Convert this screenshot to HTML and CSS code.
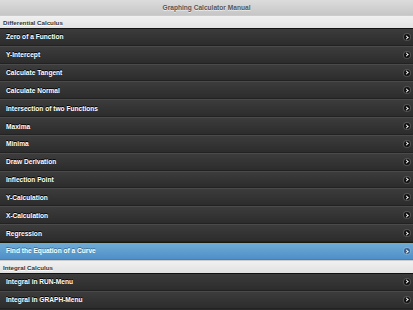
FILE: index.html
```html
<!DOCTYPE html>
<html lang="en">
<head>
  <meta charset="UTF-8" />
  <title>Graphing Calculator Manual</title>
  <link rel="stylesheet" href="styles.css">
</head>
<body>
  <div class="header">Graphing Calculator Manual</div>
  <ul class="list">
    <li class="divider">Differential Calculus</li>
    <li class="item first">Zero of a Function<span class="arrow"></span></li>
    <li class="item">Y-Intercept<span class="arrow"></span></li>
    <li class="item">Calculate Tangent<span class="arrow"></span></li>
    <li class="item">Calculate Normal<span class="arrow"></span></li>
    <li class="item">Intersection of two Functions<span class="arrow"></span></li>
    <li class="item">Maxima<span class="arrow"></span></li>
    <li class="item">Minima<span class="arrow"></span></li>
    <li class="item">Draw Derivation<span class="arrow"></span></li>
    <li class="item">Inflection Point<span class="arrow"></span></li>
    <li class="item">Y-Calculation<span class="arrow"></span></li>
    <li class="item">X-Calculation<span class="arrow"></span></li>
    <li class="item">Regression<span class="arrow"></span></li>
    <li class="item active">Find the Equation of a Curve<span class="arrow"></span></li>
    <li class="divider">Integral Calculus</li>
    <li class="item first">Integral in RUN-Menu<span class="arrow"></span></li>
    <li class="item">Integral in GRAPH-Menu<span class="arrow"></span></li>
  </ul>
</body>
</html>
```

FILE: styles.css
```css
body {
  margin: 0;
  font-family: 'Liberation Sans', Arial, sans-serif;
  background: #2a2a2a;
  overflow: hidden;
}
.header {
  height: 15px;
  line-height: 15px;
  text-align: center;
  font-size: 6.6px;
  font-weight: bold;
  color: #555;
  text-shadow: 0 1px 0 #eee;
  background: linear-gradient(#dcdcdc, #c6c6c6);
}
.list {
  list-style: none;
  margin: 0;
  padding: 0;
}
.divider {
  height: 13px;
  line-height: 13px;
  box-sizing: border-box;
  padding-left: 3px;
  font-size: 6.2px;
  font-weight: bold;
  color: #333;
  text-shadow: 0 1px 0 #fff;
  background: linear-gradient(#f0f0f0, #e2e2e2);
  border-top: 1px solid #ccc;
}
.item {
  position: relative;
  height: 17.83px;
  box-sizing: border-box;
  display: flex;
  align-items: center;
  padding-left: 6px;
  font-size: 6.6px;
  font-weight: bold;
  color: #fff;
  text-shadow: 0 -1px 0 #000;
  background: linear-gradient(#3c3c3c, #2c2c2c);
  border-top: 1px solid #4a4a4a;
  border-bottom: 1px solid #222;
}
.item.first {
  border-top: 1px solid #111;
}
.item.active {
  height: 18px;
  background: linear-gradient(#6facd5, #4f8fc8);
  border-top: 1px solid #1a1a0a;
  border-bottom: 1px solid #4a7fb0;
  text-shadow: 0 -1px 0 #3a6e9a;
}
.arrow {
  position: absolute;
  right: 3px;
  top: 50%;
  width: 6px;
  height: 6px;
  margin-top: -3px;
  border-radius: 50%;
  background: #111;
  box-shadow: 0 0 0 1px rgba(255,255,255,0.15);
}
.arrow::after {
  content: '';
  position: absolute;
  left: 1.3px;
  top: 1.6px;
  width: 2px;
  height: 2px;
  border-top: 1px solid #fff;
  border-right: 1px solid #fff;
  transform: rotate(45deg);
}
.active .arrow {
  background: #3a5f86;
}
```
